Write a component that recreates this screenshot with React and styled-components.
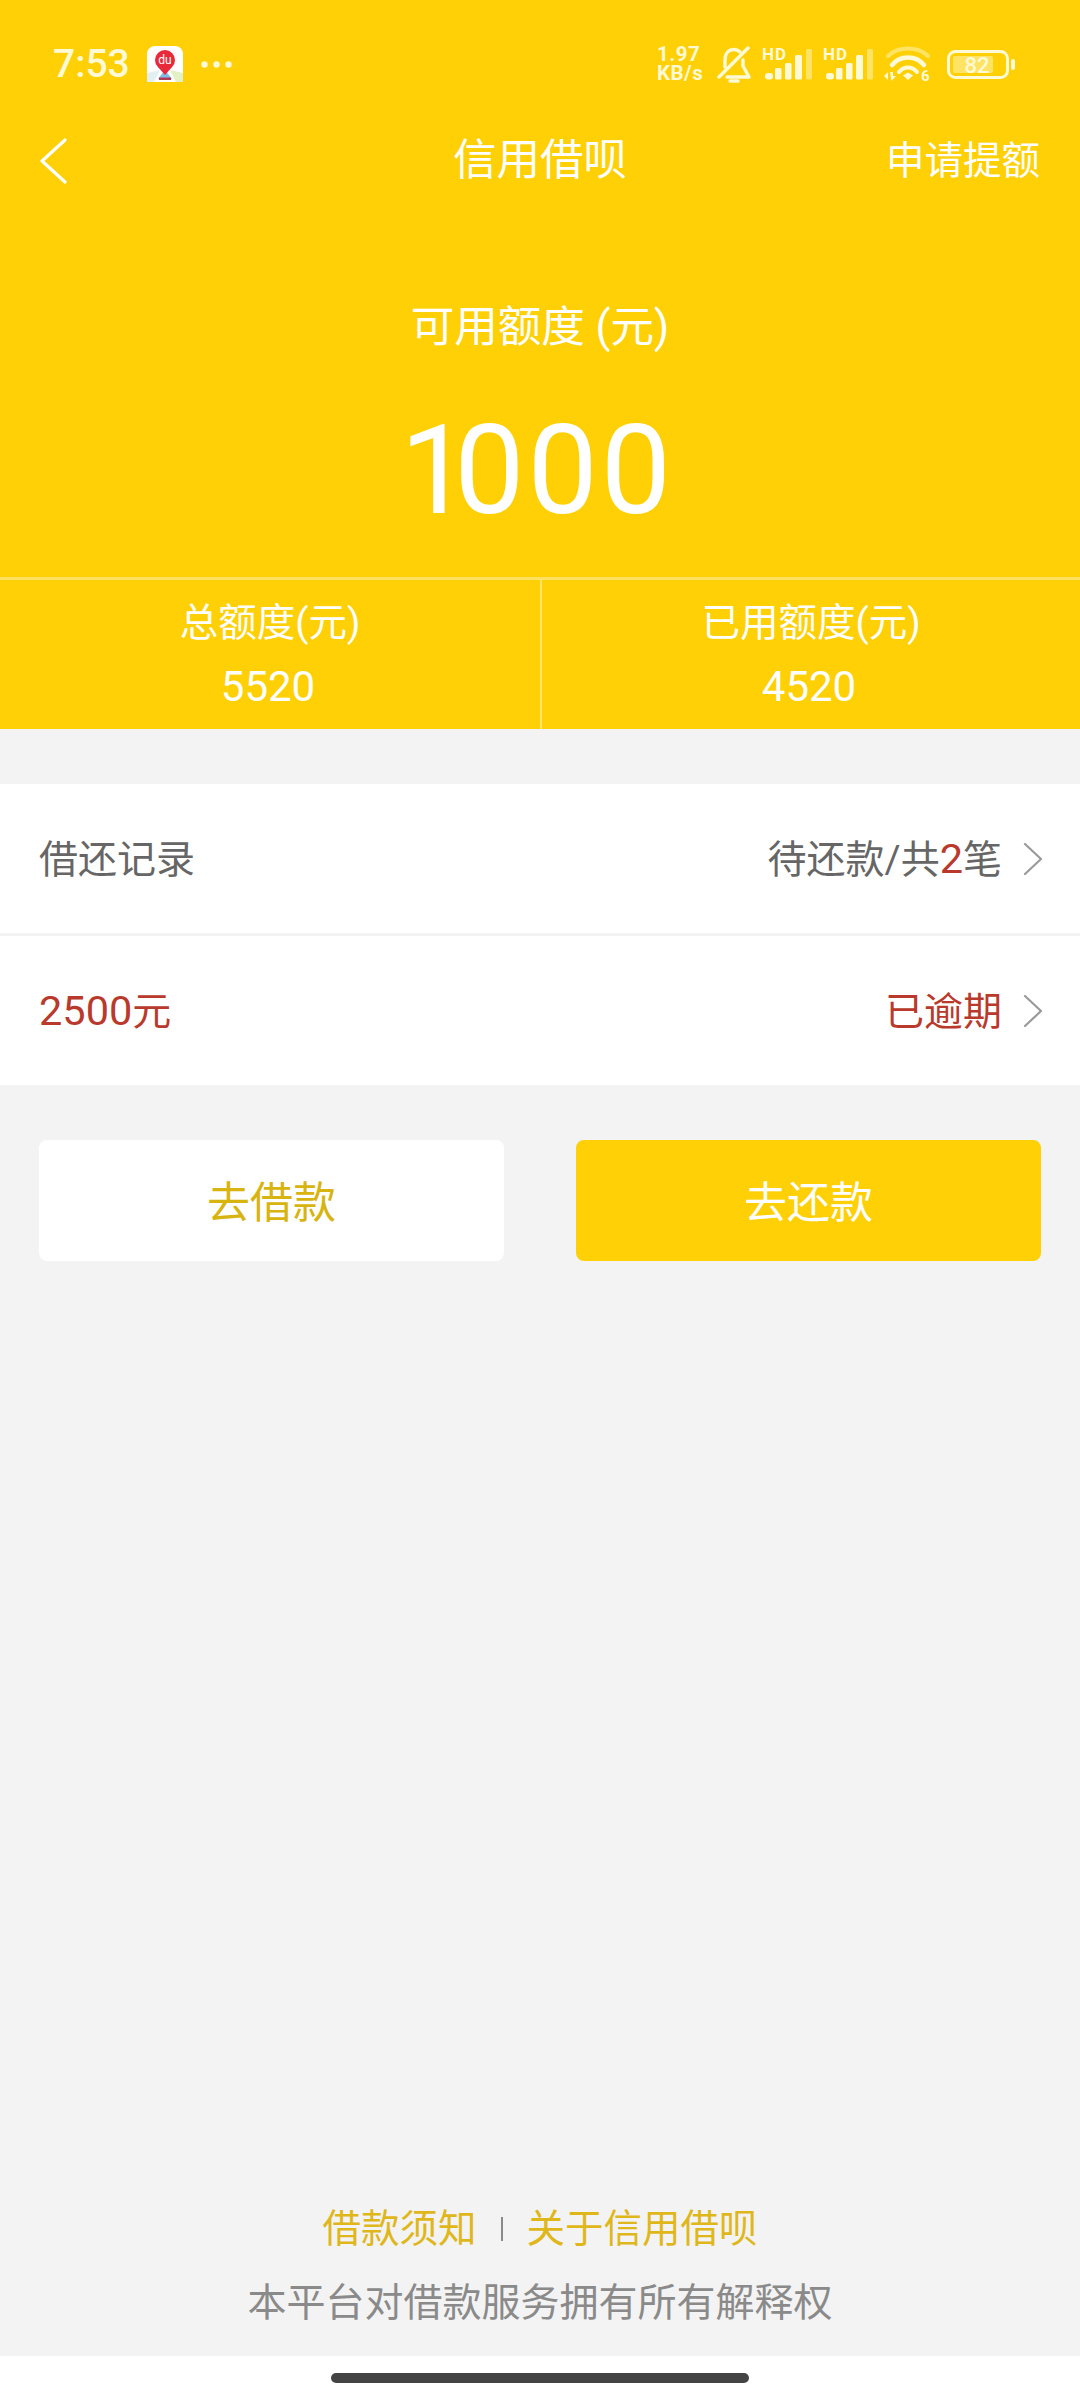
import React from 'react';
import styled, { createGlobalStyle } from 'styled-components';

const YELLOW = '#ffd006';
const CREAM = '#fff9d6';
const FAINT = '#ffe364';
const RED = '#b93a2c';

const GlobalStyle = createGlobalStyle`
  html, body {
    margin: 0;
    padding: 0;
    background: #fff;
  }
  * {
    box-sizing: border-box;
  }
`;

const Page = styled.div`
  width: 1080px;
  height: 2400px;
  display: flex;
  flex-direction: column;
  background: #f3f3f3;
  font-family: Roboto, 'Noto Sans CJK SC', sans-serif;
  overflow: hidden;
`;

const Header = styled.header`
  height: 729px;
  display: flex;
  flex-direction: column;
  background: ${YELLOW};
  color: #fff;
`;

const StatusBar = styled.div`
  height: 128px;
  flex: none;
  display: flex;
  align-items: center;
  justify-content: space-between;
  padding: 0 65px 0 53px;
  color: ${CREAM};
`;

const StatusLeft = styled.div`
  display: flex;
  align-items: center;
`;

const Time = styled.span`
  font-size: 39px;
  font-weight: 500;
  line-height: 1;
  margin-right: 17px;
`;

const Dots = styled.svg`
  margin-left: 18px;
`;

const StatusRight = styled.div`
  display: flex;
  align-items: center;
  gap: 11px;
`;

const Speed = styled.div`
  width: 49px;
  font-size: 20.5px;
  font-weight: 700;
  letter-spacing: 0.5px;
  line-height: 19px;
  white-space: nowrap;
`;

const Nav = styled.nav`
  height: 66px;
  flex: none;
  display: grid;
  grid-template-columns: 1fr auto 1fr;
  align-items: center;
  padding: 0 40px;
`;

const Title = styled.h1`
  margin: 0;
  font-size: 43.5px;
  font-weight: 400;
  line-height: 66px;
`;

const NavAction = styled.span`
  justify-self: end;
  font-size: 38.5px;
  line-height: 66px;
`;

const BackIcon = styled.svg`
  display: block;
`;

const Hero = styled.div`
  flex: 1;
  display: flex;
  flex-direction: column;
  align-items: center;
  padding-top: 110px;
`;

const HeroLabel = styled.div`
  font-size: 43.5px;
  line-height: 48px;
`;

const HeroAmount = styled.div`
  margin-top: 56px;
  font-size: 125px;
  font-weight: 400;
  letter-spacing: 3px;
  line-height: 125px;
`;

const NarrowOne = styled.span`
  letter-spacing: -16px;
  margin-left: -6px;
`;

const Stats = styled.div`
  height: 152px;
  flex: none;
  display: grid;
  grid-template-columns: 1fr 1fr;
  border-top: 3px solid #ffe060;
`;

const Stat = styled.div`
  display: flex;
  flex-direction: column;
  align-items: center;
  padding-top: 20px;
  border-left: ${(p) => (p.$divided ? '2px solid #ffe46e' : 'none')};
`;

const StatLabel = styled.div`
  font-size: 38.5px;
  line-height: 46px;
`;

const StatValue = styled.div`
  margin: 18px 4px 0 0;
  font-size: 42px;
  line-height: 46px;
`;

const List = styled.section`
  margin-top: 55px;
  display: flex;
  flex-direction: column;
  gap: 3px;
`;

const Row = styled.div`
  height: 149px;
  display: flex;
  align-items: center;
  justify-content: space-between;
  padding: 0 37px 0 39px;
  background: #fff;
  font-size: 39px;
  color: ${(p) => p.$color};
`;

const RowText = styled.span`
  margin-bottom: 5px;
`;

const RowRight = styled.div`
  display: flex;
  align-items: center;
  gap: 21px;
`;

const Digits = styled.span`
  font-size: 41.5px;
  line-height: 1;
  color: ${(p) => p.$color || 'inherit'};
`;

const Actions = styled.div`
  margin-top: 55px;
  display: grid;
  grid-template-columns: 465px 465px;
  justify-content: space-between;
  padding: 0 39px;
`;

const ActionButton = styled.button`
  height: 121px;
  padding: 0 0 3px;
  border: none;
  border-radius: 8px;
  font-family: inherit;
  font-size: 43px;
  background: ${(p) => (p.$primary ? YELLOW : '#fff')};
  color: ${(p) => (p.$primary ? '#fff' : '#d7b40f')};
`;

const Footer = styled.footer`
  margin-top: auto;
  display: flex;
  flex-direction: column;
  align-items: center;
  padding-bottom: 28px;
`;

const FooterLinks = styled.div`
  display: flex;
  align-items: center;
  font-size: 38.5px;
  line-height: 50px;
  color: #e0b71a;
`;

const Separator = styled.span`
  width: 2px;
  height: 24px;
  margin: 0 24px;
  background: #8a8a8a;
`;

const Notice = styled.div`
  margin-top: 24px;
  font-size: 39px;
  line-height: 50px;
  color: #8a8a8a;
`;

const HomeArea = styled.div`
  height: 44px;
  flex: none;
  display: flex;
  justify-content: center;
  padding-top: 17px;
  background: #fff;
`;

const HomeBar = styled.div`
  width: 418px;
  height: 10px;
  border-radius: 5px;
  background: #444;
`;

const DuIcon = () => (
  <svg width="36" height="36" viewBox="0 0 36 36">
    <rect width="36" height="36" rx="8" fill="#fff" />
    <path d="M0 27 L13 24 L7 36 L0 36Z" fill="#e4eff4" />
    <path d="M36 27 L23 24 L29 36 L36 36Z" fill="#e3efc4" />
    <path d="M18 24 L11 33 L25 33Z" fill="#7fbde6" />
    <rect x="12" y="31.5" width="12" height="2.5" fill="#b13a55" />
    <circle cx="18" cy="14" r="10" fill="#e8293a" />
    <path d="M11 21 L18 29 L25 21Z" fill="#e8293a" />
    <text x="18" y="18" textAnchor="middle" fontSize="12" fill="#fff" fontFamily="Roboto, sans-serif">du</text>
  </svg>
);

const BellMuted = () => (
  <svg width="34" height="37" viewBox="0 0 34 37" fill="none" stroke={CREAM} strokeWidth="3.4" strokeLinecap="round" strokeLinejoin="round">
    <path d="M8 21 V14 C8 7 12 3.5 17 3.5 C19.5 3.5 21.5 4.5 23 6" />
    <path d="M26 14 V20 L32 31 H10" />
    <path d="M2 31 L31 2" />
    <path d="M13 35 H21" />
  </svg>
);

const Signal = () => (
  <svg width="50" height="41" viewBox="0 -5 50 41">
    <text x="0" y="10.5" fontSize="17" fontWeight="700" letterSpacing="1" fill={CREAM} fontFamily="Roboto, sans-serif">HD</text>
    <rect x="3" y="24" width="8" height="6.5" rx="3" fill={CREAM} />
    <rect x="13" y="19" width="6.5" height="11.5" rx="1.5" fill={CREAM} />
    <rect x="23" y="14" width="6.5" height="16.5" rx="1.5" fill={CREAM} />
    <rect x="33" y="6" width="7" height="24.5" rx="1.5" fill={CREAM} />
    <rect x="44" y="0" width="6" height="30.5" rx="1.5" fill={FAINT} />
  </svg>
);

const Wifi = () => (
  <svg width="52" height="43" viewBox="0 -4 52 43" fill="none" strokeLinecap="round">
    <path d="M4 9 C14 -1 34 -1 44 9" stroke={FAINT} strokeWidth="4" />
    <path d="M8 18 C16 8 32 8 40 18" stroke={CREAM} strokeWidth="4.5" />
    <path d="M15 25 C20 19 28 19 33 25" stroke={CREAM} strokeWidth="4" />
    <path d="M19 28.5 L24 25.5 L29 28.5 L24 33Z" fill={CREAM} />
    <path d="M0 29 L4 25 V33Z M6 25 H9 V29 L12 29 L7.5 34Z" fill={CREAM} />
    <text x="37" y="34" fontSize="15" fontWeight="700" fill={CREAM} fontFamily="Roboto, sans-serif">6</text>
  </svg>
);

const Battery = () => (
  <svg width="68" height="29" viewBox="0 0 68 29">
    <rect x="1.5" y="1.5" width="59" height="26" rx="7" fill="none" stroke={CREAM} strokeWidth="3" />
    <rect x="6" y="6" width="40" height="17" rx="2" fill={FAINT} />
    <rect x="64" y="9" width="4" height="11" rx="2" fill={CREAM} />
    <text x="30" y="22.5" textAnchor="middle" fontSize="22" fontWeight="500" fill={CREAM} fontFamily="Roboto, sans-serif">82</text>
  </svg>
);

const Chevron = () => (
  <svg width="20" height="32" viewBox="0 0 20 32" fill="none" stroke="#9a9a9a" strokeWidth="2.2" strokeLinecap="round" strokeLinejoin="round">
    <path d="M2 1 L18 16 L2 31" />
  </svg>
);

export default function App() {
  return (
    <Page>
      <GlobalStyle />
      <Header>
        <StatusBar>
          <StatusLeft>
            <Time>7:53</Time>
            <DuIcon />
            <Dots width="31" height="7" viewBox="0 0 31 7" fill={CREAM}>
              <circle cx="3.5" cy="3.5" r="3.2" />
              <circle cx="15.5" cy="3.5" r="3.2" />
              <circle cx="27.5" cy="3.5" r="3.2" />
            </Dots>
          </StatusLeft>
          <StatusRight>
            <Speed>
              1.97
              <br />
              KB/s
            </Speed>
            <BellMuted />
            <Signal />
            <Signal />
            <Wifi />
            <Battery />
          </StatusRight>
        </StatusBar>
        <Nav>
          <BackIcon width="27" height="46" viewBox="0 0 27 46" fill="none" stroke="#fff" strokeWidth="3.2" strokeLinecap="round" strokeLinejoin="round">
            <path d="M25 2 L2 23 L25 44" />
          </BackIcon>
          <Title>信用借呗</Title>
          <NavAction>申请提额</NavAction>
        </Nav>
        <Hero>
          <HeroLabel>可用额度 (元)</HeroLabel>
          <HeroAmount>
            <NarrowOne>1</NarrowOne>000
          </HeroAmount>
        </Hero>
        <Stats>
          <Stat>
            <StatLabel>总额度(元)</StatLabel>
            <StatValue>5520</StatValue>
          </Stat>
          <Stat $divided>
            <StatLabel>已用额度(元)</StatLabel>
            <StatValue>4520</StatValue>
          </Stat>
        </Stats>
      </Header>

      <List>
        <Row $color="#666">
          <RowText>借还记录</RowText>
          <RowRight>
            <RowText>
              待还款/共<Digits $color={RED}>2</Digits>笔
            </RowText>
            <Chevron />
          </RowRight>
        </Row>
        <Row $color={RED}>
          <RowText>
            <Digits>2500</Digits>元
          </RowText>
          <RowRight>
            <RowText>已逾期</RowText>
            <Chevron />
          </RowRight>
        </Row>
      </List>

      <Actions>
        <ActionButton>去借款</ActionButton>
        <ActionButton $primary>去还款</ActionButton>
      </Actions>

      <Footer>
        <FooterLinks>
          <span>借款须知</span>
          <Separator />
          <span>关于信用借呗</span>
        </FooterLinks>
        <Notice>本平台对借款服务拥有所有解释权</Notice>
      </Footer>
      <HomeArea>
        <HomeBar />
      </HomeArea>
    </Page>
  );
}
